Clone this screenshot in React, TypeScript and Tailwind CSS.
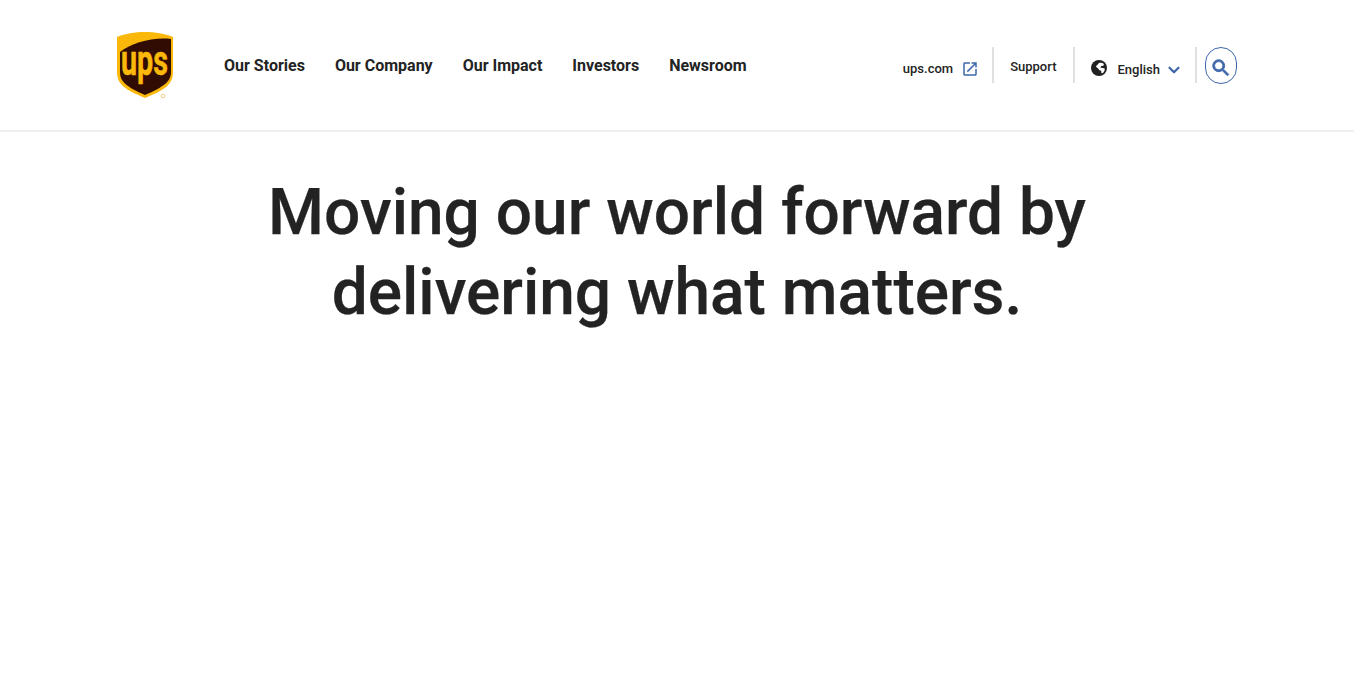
import { ChevronDown } from "lucide-react";

const navLinks = ["Our Stories", "Our Company", "Our Impact", "Investors", "Newsroom"];

function UpsLogo() {
  return (
    <svg width="62" height="70" viewBox="0 0 62 70" className="block overflow-visible">
      <path
        d="M31 2C21 2 11 3.500 3 7V42C3 55 12 60 31 68C50 60 59 55 59 42V7C51 3.500 41 2 31 2Z"
        fill="#fab80a"
      />
      <path
        d="M57 9V42C57 52 49 57 31 65C13 57 6 52 6 42V22C18 13 38 7 57 9Z"
        fill="#300c02"
      />
      <text
        x="30.500"
        y="45"
        textAnchor="middle"
        fill="#fab80a"
        stroke="#fab80a"
        strokeWidth="0.500"
        fontFamily="Roboto, sans-serif"
        fontWeight="700"
        fontSize="42"
        textLength="47"
        lengthAdjust="spacingAndGlyphs"
      >
        ups
      </text>
      <circle cx="49" cy="66" r="1.800" fill="none" stroke="#eccf86" strokeWidth="1" />
    </svg>
  );
}

function ExternalIcon() {
  return (
    <svg width="18" height="18" viewBox="0 0 24 24" fill="#3f68ab" className="block">
      <path d="M19 19H5V5h7V3H5c-1.110 0-2 .900-2 2v14c0 1.100.890 2 2 2h14c1.100 0 2-.900 2-2v-7h-2v7zM14 3v2h3.590l-9.830 9.830 1.410 1.410L19 6.410V10h2V3h-7z" />
    </svg>
  );
}

function GlobeIcon() {
  return (
    <svg width="16" height="16" viewBox="0 0 18 18" className="block">
      <circle cx="9" cy="9" r="9" fill="#212121" />
      <path
        d="M9 3.500C11 2.800 13 3 14.500 4.500L14 6.500L11.500 6.800L10.500 8.500L13 9L15.500 9.500L15.200 12L13.500 14.500L11.800 14.800L11.500 12L9.500 11.500L8 9.500L6.500 8.500L5.500 7L7 5.500Z"
        fill="#ffffff"
      />
    </svg>
  );
}

function SearchIcon() {
  return (
    <svg width="22" height="22" viewBox="0 0 24 24" fill="#3f68ab" className="block">
      <path
        d="M15.500 14h-.790l-.280-.270C15.410 12.590 16 11.110 16 9.500 16 5.910 13.090 3 9.500 3S3 5.910 3 9.500 5.910 16 9.500 16c1.610 0 3.090-.590 4.230-1.570l.270.280v.790l5 4.990L20.490 19l-4.990-5zm-6 0C7.010 14 5 11.990 5 9.500S7.010 5 9.500 5 14 7.010 14 9.500 11.990 14 9.500 14z"
        stroke="#3f68ab"
        strokeWidth="1"
      />
    </svg>
  );
}

export default function App() {
  return (
    <div className="w-[1354px] min-h-[682px] bg-white font-['Roboto',sans-serif] text-[#232323]">
      <header className="h-[132px] border-b-2 border-[#efefef] pl-[114px] pr-[117px] flex items-start">
        <div className="pt-[30px]">
          <UpsLogo />
        </div>
        <nav className="ml-[48px] mt-[55px] flex gap-[30px] text-base font-bold leading-[21px]">
          {navLinks.map((label) => (
            <a key={label} href="#">
              {label}
            </a>
          ))}
        </nav>
        <div className="ml-auto mt-[47px] flex items-start text-[13px] font-medium">
          <a href="#" className="h-9 flex items-center gap-[8px] pt-[7px] pr-[13px] border-r-2 border-[#e0e0e0]">
            ups.com
            <ExternalIcon />
          </a>
          <a href="#" className="h-9 flex items-center pt-[4px] pl-[16px] pr-[16px] border-r-2 border-[#e0e0e0]">
            Support
          </a>
          <button className="h-9 flex items-center pt-[4px] pl-[16px] pr-[12px] border-r-2 border-[#e0e0e0] font-medium">
            <span className="mt-[1px]">
              <GlobeIcon />
            </span>
            <span className="ml-[11px] pt-[5px]">English</span>
            <ChevronDown size={18} strokeWidth={3} className="ml-[5px] mt-[6px] text-[#3f68ab]" />
          </button>
          <button className="ml-2 w-8 h-[37px] pt-[4px] rounded-full border border-[#3f68ab] flex items-center justify-center">
            <SearchIcon />
          </button>
        </div>
      </header>
      <main className="pt-[41px] flex justify-center">
        <h1 className="w-[900px] text-center text-[64px] leading-[80px] font-medium [-webkit-text-stroke:0.25px_#232323]">
          Moving our world forward by delivering what matters.
        </h1>
      </main>
    </div>
  );
}
